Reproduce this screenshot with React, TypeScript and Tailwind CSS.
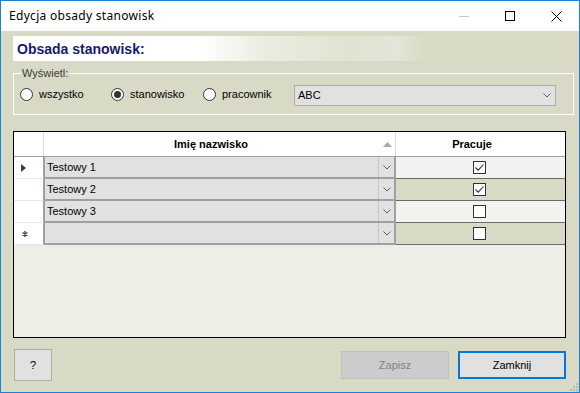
import React from 'react';

function Check({ checked }: { checked: boolean }) {
  return (
    <div className="w-[13px] h-[13px] border border-[#333333] bg-white flex items-center justify-center">
      {checked && (
        <svg width="11" height="11" viewBox="0 0 11 11">
          <path d="M1.5 5.5 L4.2 8.2 L9.5 2.5" fill="none" stroke="#333333" strokeWidth="1.1" />
        </svg>
      )}
    </div>
  );
}

function Chevron() {
  return (
    <svg width="8" height="5" viewBox="0 0 8 5">
      <path d="M0.5 0.5 L4 4 L7.5 0.5" fill="none" stroke="#606060" strokeWidth="1" />
    </svg>
  );
}

function Radio({ label, checked, w }: { label: string; checked?: boolean; w: string }) {
  return (
    <div className={`flex items-center h-[21px] pb-[2px] ${w}`}>
      <div className="w-[13px] h-[13px] rounded-full border border-[#333333] bg-white flex items-center justify-center shrink-0">
        {checked && <div className="w-[7px] h-[7px] rounded-full bg-[#333333]" />}
      </div>
      <span className="ml-[6px]">{label}</span>
    </div>
  );
}

export default function App() {
  const rows = [
    { name: 'Testowy 1', checked: true, head: 'arrow', alt: false },
    { name: 'Testowy 2', checked: true, head: '', alt: true },
    { name: 'Testowy 3', checked: false, head: '', alt: false },
    { name: '', checked: false, head: 'star', alt: true },
  ];
  return (
    <div className="w-[580px] h-[393px] border border-[#1883d7] flex flex-col bg-[#d9dac5] font-['Liberation_Sans',Arial,sans-serif] text-[11px] text-black overflow-hidden">
      <div className="h-[30px] bg-white flex items-center shrink-0">
        <span className="pl-[8px] font-['Noto_Sans',sans-serif] text-[12px] tracking-[0.3px] flex-1 leading-none pb-[1px]">Edycja obsady stanowisk</span>
        <div className="w-[46px] h-full flex items-center justify-center">
          <div className="w-[10px] h-px bg-[#c6c6c6]" />
        </div>
        <div className="w-[46px] h-full flex items-center justify-center">
          <div className="w-[10px] h-[10px] border border-black" />
        </div>
        <div className="w-[46px] h-full flex items-center justify-center">
          <svg width="11" height="11" viewBox="0 0 11 11">
            <path d="M0.5 0.5 L10.5 10.5 M10.5 0.5 L0.5 10.5" stroke="#000" strokeWidth="1" />
          </svg>
        </div>
      </div>

      <div className="flex-1 relative flex flex-col pl-[12px] pt-[5px]">
        <div className="h-[25px] w-[412px] flex items-center pl-[4px] bg-[linear-gradient(to_right,#ffffff_0%,#ffffff_45%,#ecebdf_62%,#dfe3d3_82%,#e3e6d8_93%,#d9dac5_100%)]">
          <span className="text-[14px] font-bold text-[#191970] leading-none">Obsada stanowisk:</span>
        </div>

        <div className="mt-[12px] relative w-[561px] h-[42px] border border-white">
          <span className="absolute left-[7px] top-[-7px] px-px bg-[#d9dac5] text-[#3a3a3a] leading-[13px]">Wyświetl:</span>
          <div className="flex pt-[11px] pl-[6px]">
            <Radio label="wszystko" w="w-[91px]" />
            <Radio label="stanowisko" checked w="w-[92px]" />
            <Radio label="pracownik" w="w-[91px]" />
            <div className="w-[262px] h-[21px] border border-[#adadad] bg-[#e1e1e1] flex items-center pl-[3px]">
              <span className="flex-1">ABC</span>
              <div className="mr-[4px] flex items-center">
                <Chevron />
              </div>
            </div>
          </div>
        </div>

        <div className="mt-[16px] w-[553px] h-[207px] border border-black bg-[#efeee6] flex flex-col">
          <div className="h-[25px] flex bg-white border-b border-[#a0a0a0] shrink-0 font-bold">
            <div className="w-[30px] border-r border-[#dcdcdc]" />
            <div className="w-[352px] border-r border-[#dcdcdc] flex items-center">
              <span className="flex-1 text-center">Imię nazwisko</span>
              <div className="w-[17px] pl-[5px] flex items-center">
                <svg width="9" height="5" viewBox="0 0 9 5">
                  <path d="M4.5 0 L9 5 L0 5 Z" fill="#a8a8a8" />
                </svg>
              </div>
            </div>
            <div className="flex-1 flex items-center pr-[17px]">
              <span className="flex-1 text-center">Pracuje</span>
            </div>
          </div>
          {rows.map((r, i) => (
            <div key={i} className="h-[22px] flex shrink-0">
              <div className="w-[30px] bg-white border-r border-b border-r-[#a0a0a0] border-b-[#e6e6e6] flex items-center pl-[7px]">
                {r.head === 'arrow' && (
                  <svg width="5" height="8" viewBox="0 0 5 8">
                    <path d="M0 0 L5 4 L0 8 Z" fill="#3c3c3c" />
                  </svg>
                )}
                {r.head === 'star' && (
                  <svg width="6" height="6" viewBox="0 0 6 6" className="ml-[1px] mt-[1px]">
                    <path d="M3 0 V6 M0.4 1.5 L5.6 4.5 M5.6 1.5 L0.4 4.5" stroke="#505050" strokeWidth="1.4" />
                  </svg>
                )}
              </div>
              <div className="w-[352px] bg-[#e1e1e1] border-l border-b-2 border-r-2 border-[#a0a0a0] flex items-center">
                <span className="flex-1 pl-[2px]">{r.name}</span>
                <div className="w-[16px] h-full border-l border-[#c8c8c8] flex items-center justify-center">
                  <Chevron />
                </div>
              </div>
              <div className={`flex-1 border-b border-[#6b6b6b] flex items-center justify-center pr-[2px] ${r.alt ? 'bg-[#d9dac5]' : 'bg-[#f2f3f1]'}`}>
                <Check checked={r.checked} />
              </div>
            </div>
          ))}
        </div>

        <div className="mt-[11px] w-[553px] h-[32px] flex items-center">
          <div className="ml-[1px] w-[38px] h-[32px] border border-[#adadad] bg-[#e1e1e1] flex items-center justify-center">?</div>
          <div className="flex-1" />
          <div className="w-[108px] h-[28px] border border-[#bfbfbf] bg-[#cccccc] text-[#838383] flex items-center justify-center">Zapisz</div>
          <div className="ml-[9px] w-[108px] h-[28px] border-2 border-[#0078d7] bg-[#e1e1e1] flex items-center justify-center">Zamknij</div>
        </div>

        <svg width="8" height="8" viewBox="0 0 8 8" className="absolute right-[1px] bottom-[1px]">
          <rect x="6" y="0" width="2" height="2" fill="#b8b8b8" />
          <rect x="3" y="3" width="2" height="2" fill="#b8b8b8" />
          <rect x="6" y="3" width="2" height="2" fill="#b8b8b8" />
          <rect x="0" y="6" width="2" height="2" fill="#b8b8b8" />
          <rect x="3" y="6" width="2" height="2" fill="#b8b8b8" />
          <rect x="6" y="6" width="2" height="2" fill="#b8b8b8" />
        </svg>
      </div>
    </div>
  );
}
